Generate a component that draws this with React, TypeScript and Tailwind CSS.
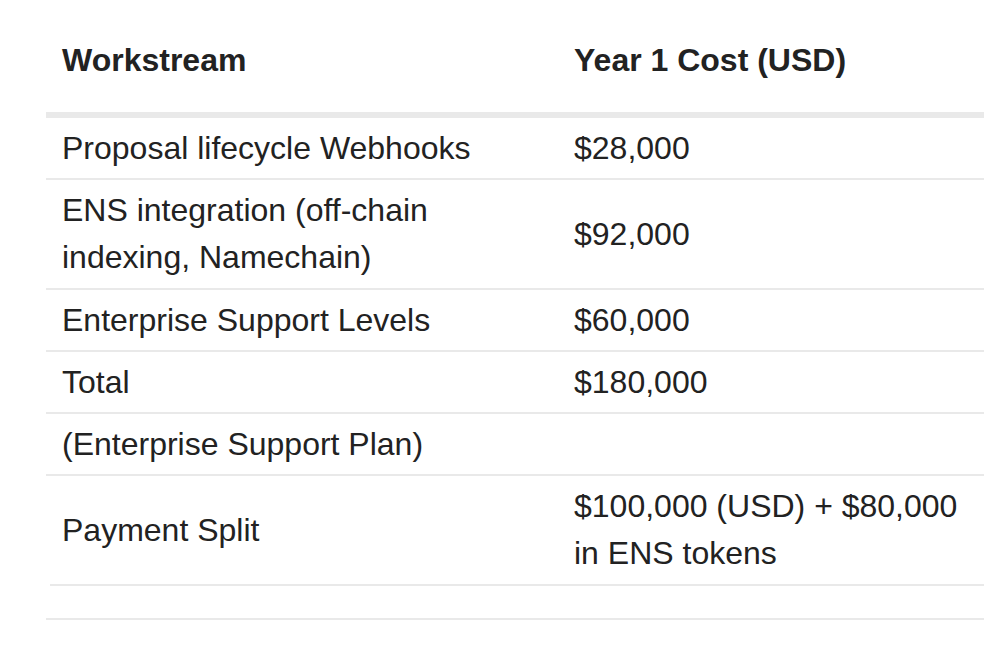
const rows: { name: string[]; cost: string[]; h: string; inset?: boolean }[] = [
  { name: ['Proposal lifecycle Webhooks'], cost: ['$28,000'], h: 'h-[60px]' },
  { name: ['ENS integration (off-chain', 'indexing, Namechain)'], cost: ['$92,000'], h: 'h-[108px]' },
  { name: ['Enterprise Support Levels'], cost: ['$60,000'], h: 'h-[60px]' },
  { name: ['Total'], cost: ['$180,000'], h: 'h-[60px]' },
  { name: ['(Enterprise Support Plan)'], cost: [], h: 'h-[60px]' },
  { name: ['Payment Split'], cost: ['$100,000 (USD) + $80,000', 'in ENS tokens'], h: 'h-[108px]', inset: true },
  { name: [], cost: [], h: 'h-[32px]' },
];

export default function App() {
  return (
    <div className="h-[646px] w-[984px] overflow-hidden bg-white pl-[46px] font-['Liberation_Sans',Arial,sans-serif] text-[32px] leading-[47px] text-[#222222]">
      <div className="w-[1000px]">
        {/* header */}
        <div className="flex h-[118px] border-b-[6px] border-[#e9e9e9] pt-[37px] font-bold">
          <div className="w-[512px] pl-4">Workstream</div>
          <div className="flex-1 pl-4">Year 1 Cost (USD)</div>
        </div>

        {rows.map((r, i) => (
          <div key={i}>
            <div className={`flex items-center ${r.h}`}>
              <div className="w-[512px] pl-4">
                {r.name.map((t) => (
                  <div key={t}>{t}</div>
                ))}
              </div>
              <div className="flex-1 pl-4">
                {r.cost.map((t) => (
                  <div key={t}>{t}</div>
                ))}
              </div>
            </div>
            <div className={`h-[2px] bg-[#e9e9e9] ${r.inset ? 'ml-[4px]' : ''}`} />
          </div>
        ))}
      </div>
    </div>
  );
}
